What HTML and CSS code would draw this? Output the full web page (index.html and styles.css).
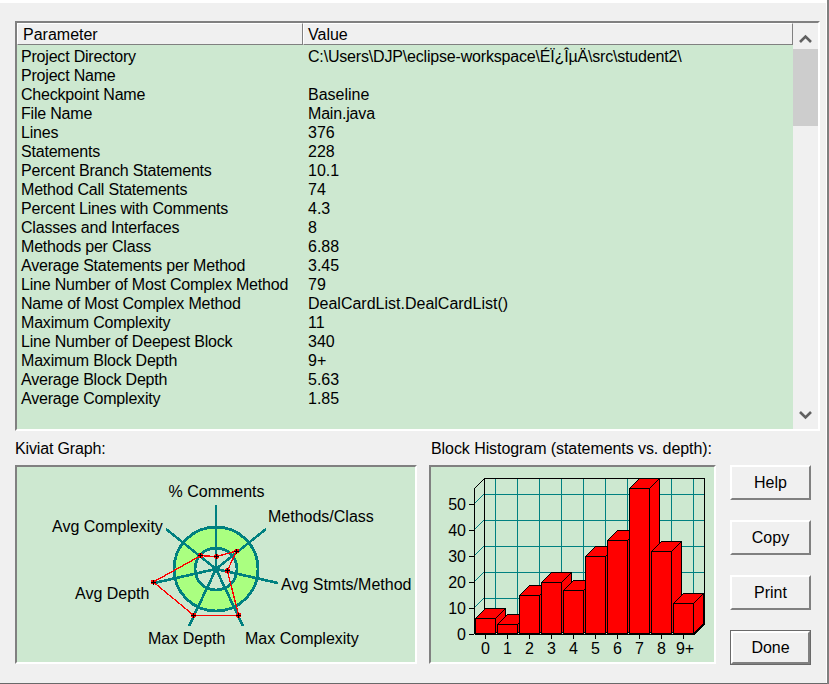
FILE: index.html
```html
<!DOCTYPE html>
<html lang="en">
<head>
<meta charset="utf-8">
<title>Project Metrics</title>
<link rel="stylesheet" href="styles.css">
</head>
<body>
<div class="window">
  <section class="table-frame">
    <div class="table-main">
      <div class="table-head">
        <div class="head-cell head-param">Parameter</div>
        <div class="head-cell head-value">Value</div>
      </div>
      <div class="table-body">
        <div class="row"><span class="param">Project Directory</span><span class="value value-tight">C:\Users\DJP\eclipse-workspace\ÉÏ¿ÎµÄ\src\student2\</span></div>
        <div class="row"><span class="param">Project Name</span><span class="value"></span></div>
        <div class="row"><span class="param">Checkpoint Name</span><span class="value">Baseline</span></div>
        <div class="row"><span class="param">File Name</span><span class="value value-tight">Main.java</span></div>
        <div class="row"><span class="param">Lines</span><span class="value">376</span></div>
        <div class="row"><span class="param">Statements</span><span class="value">228</span></div>
        <div class="row"><span class="param">Percent Branch Statements</span><span class="value">10.1</span></div>
        <div class="row"><span class="param">Method Call Statements</span><span class="value">74</span></div>
        <div class="row"><span class="param">Percent Lines with Comments</span><span class="value">4.3</span></div>
        <div class="row"><span class="param">Classes and Interfaces</span><span class="value">8</span></div>
        <div class="row"><span class="param">Methods per Class</span><span class="value">6.88</span></div>
        <div class="row"><span class="param">Average Statements per Method</span><span class="value">3.45</span></div>
        <div class="row"><span class="param">Line Number of Most Complex Method</span><span class="value">79</span></div>
        <div class="row"><span class="param">Name of Most Complex Method</span><span class="value">DealCardList.DealCardList()</span></div>
        <div class="row"><span class="param">Maximum Complexity</span><span class="value">11</span></div>
        <div class="row"><span class="param">Line Number of Deepest Block</span><span class="value">340</span></div>
        <div class="row"><span class="param">Maximum Block Depth</span><span class="value">9+</span></div>
        <div class="row"><span class="param">Average Block Depth</span><span class="value">5.63</span></div>
        <div class="row"><span class="param">Average Complexity</span><span class="value">1.85</span></div>
      </div>
    </div>
    <div class="scrollbar">
      <svg class="scroll-arrow" width="25" height="26" viewBox="0 0 25 26"><path d="M7 19l5.500-5.500L18 19" fill="none" stroke="#606060" stroke-width="2.6"/></svg>
      <div class="scroll-track"><div class="scroll-thumb"></div></div>
      <svg class="scroll-arrow" width="25" height="26" viewBox="0 0 25 26"><path d="M7 9l5.500 5.500L18 9" fill="none" stroke="#606060" stroke-width="2.6"/></svg>
    </div>
  </section>

  <section class="lower">
    <figure class="graph graph-kiviat">
      <figcaption class="caption caption-kiviat">Kiviat Graph:</figcaption>
      <div class="panel">
        <svg class="chart" width="398" height="195" viewBox="17 467 398 195">
          <g shape-rendering="crispEdges">
            <circle cx="216" cy="569" r="42" fill="#aaff80" stroke="#008080" stroke-width="2.8"/>
            <circle cx="216" cy="569" r="21" fill="#cde8d0" stroke="#008080" stroke-width="2.8"/>
            <g stroke="#008080" stroke-width="2.6">
              <line x1="216" y1="569" x2="216" y2="505"/>
              <line x1="216" y1="569" x2="266" y2="529"/>
              <line x1="216" y1="569" x2="278" y2="583"/>
              <line x1="216" y1="569" x2="243" y2="626"/>
              <line x1="216" y1="569" x2="189" y2="626"/>
              <line x1="216" y1="569" x2="154" y2="583"/>
              <line x1="216" y1="569" x2="166" y2="529"/>
            </g>
            <polygon points="216.7,556.5 236.7,551 227.3,570.7 238.7,615.3 193.7,615.3 153.3,582 200.7,555.7" fill="none" stroke="#ff0000" stroke-width="1.3"/>
            <g fill="#ff0000">
              <circle cx="216.7" cy="556.5" r="2.5"/><circle cx="236.7" cy="551" r="2.5"/><circle cx="227.3" cy="570.7" r="2.5"/><circle cx="238.7" cy="615.3" r="2.5"/><circle cx="193.7" cy="615.3" r="2.5"/><circle cx="153.3" cy="582" r="2.5"/><circle cx="200.7" cy="555.7" r="2.5"/>
            </g>
            <path d="M214 556.500h5M216.500 554v5M234 551.500h5M236.500 548.500v5M225 570.500h5M227.500 568v5M236 615.500h5M238.500 613v5M191 615.500h5M193.500 613v5M151 582.500h5M153.500 579.500v5M198 555.500h5M200.500 553v5" fill="none" stroke="#000" stroke-width="1"/>
          </g>
          <g class="chart-text">
            <text x="168.500" y="497">% Comments</text>
            <text x="268" y="522">Methods/Class</text>
            <text x="281" y="590">Avg Stmts/Method</text>
            <text x="245" y="644">Max Complexity</text>
            <text x="148" y="644">Max Depth</text>
            <text x="75" y="599">Avg Depth</text>
            <text x="52" y="532">Avg Complexity</text>
          </g>
        </svg>
      </div>
    </figure>

    <figure class="graph graph-histogram">
      <figcaption class="caption caption-histogram">Block Histogram (statements vs. depth):</figcaption>
      <div class="panel">
        <svg class="chart" width="283" height="195" viewBox="431 467 283 195">
          <g stroke="#008080" stroke-width="1" shape-rendering="crispEdges">
            <path d="M484 494.500H704M484 520.500H704M484 546.500H704M484 572.500H704M484 598.500H704"/>
            <path d="M495.500 478V624M517.500 478V624M539.500 478V624M561.500 478V624M583.500 478V624M605.500 478V624M627.500 478V624M649.500 478V624M671.500 478V624M693.500 478V624"/>
          </g>
          <path d="M474 608l10-10M474 582l10-10M474 556l10-10M474 530l10-10M474 504l10-10" stroke="#008080" fill="none" shape-rendering="crispEdges"/>
          <path d="M474.500 634V488.500l10-10H704.500V624l-10 10H474.500M484.500 478.500V624" stroke="#000" fill="none" shape-rendering="crispEdges"/>
          <path d="M469 504.500h5M469 530.500h5M469 556.500h5M469 582.500h5M469 608.500h5M469 634.500h5M485.500 634v5M507.500 634v5M529.500 634v5M551.500 634v5M573.500 634v5M595.500 634v5M617.500 634v5M639.500 634v5M661.500 634v5M683.500 634v5" stroke="#000" fill="none" shape-rendering="crispEdges"/>
          <g fill="#ff0000" stroke="#000" stroke-width="1" shape-rendering="crispEdges">
            <path d="M475.500 618.500h20v15h-20zM475.500 618.500l10-10h20l-10 10zM495.500 618.500l10-10v15l-10 10z"/>
            <path d="M497.500 624.500h20v9h-20zM497.500 624.500l10-10h20l-10 10zM517.500 624.500l10-10v9l-10 10z"/>
            <path d="M519.500 595.500h20v38h-20zM519.500 595.500l10-10h20l-10 10zM539.500 595.500l10-10v38l-10 10z"/>
            <path d="M541.500 582.500h20v51h-20zM541.500 582.500l10-10h20l-10 10zM561.500 582.500l10-10v51l-10 10z"/>
            <path d="M563.500 590.500h20v43h-20zM563.500 590.500l10-10h20l-10 10zM583.500 590.500l10-10v43l-10 10z"/>
            <path d="M585.500 556.500h20v77h-20zM585.500 556.500l10-10h20l-10 10zM605.500 556.500l10-10v77l-10 10z"/>
            <path d="M607.500 540.500h20v93h-20zM607.500 540.500l10-10h20l-10 10zM627.500 540.500l10-10v93l-10 10z"/>
            <path d="M629.500 488.500h20v145h-20zM629.500 488.500l10-10h20l-10 10zM649.500 488.500l10-10v145l-10 10z"/>
            <path d="M651.500 551.500h20v82h-20zM651.500 551.500l10-10h20l-10 10zM671.500 551.500l10-10v82l-10 10z"/>
            <path d="M673.500 603.500h20v30h-20zM673.500 603.500l10-10h20l-10 10zM693.500 603.500l10-10v30l-10 10z"/>
          </g>
          <g class="chart-text axis-y">
            <text x="466" y="510">50</text>
            <text x="466" y="536">40</text>
            <text x="466" y="562">30</text>
            <text x="466" y="588">20</text>
            <text x="466" y="614">10</text>
            <text x="466" y="640">0</text>
          </g>
          <g class="chart-text axis-x">
            <text x="485.500" y="654">0</text>
            <text x="507.500" y="654">1</text>
            <text x="529.500" y="654">2</text>
            <text x="551.500" y="654">3</text>
            <text x="573.500" y="654">4</text>
            <text x="595.500" y="654">5</text>
            <text x="617.500" y="654">6</text>
            <text x="639.500" y="654">7</text>
            <text x="661.500" y="654">8</text>
            <text x="685" y="654">9+</text>
          </g>
        </svg>
      </div>
    </figure>

    <div class="buttons">
      <button class="btn" type="button">Help</button>
      <button class="btn" type="button">Copy</button>
      <button class="btn" type="button">Print</button>
      <button class="btn btn-default" type="button">Done</button>
    </div>
  </section>
</div>
</body>
</html>
```

FILE: styles.css
```css
* { box-sizing: border-box; }

html, body {
  margin: 0;
  padding: 0;
  background: #fff;
}

body {
  width: 829px;
  height: 684px;
  overflow: hidden;
  font: 16px/19px "Liberation Sans", Arial, sans-serif;
  color: #000;
  border-right: 2px solid #7f7f7f;
}

.window {
  width: 826px;
  height: 680px;
  margin-top: 3px;
  padding: 18px 6px 0 15px;
  background: #f0f0f0;
  display: flex;
  flex-direction: column;
}

body::after {
  content: "";
  display: block;
  height: 1px;
  background: #696969;
}

.table-frame {
  display: flex;
  width: 805px;
  height: 410px;
  border: 2px solid;
  border-color: #808080 #fff #fff #808080;
}

.table-main {
  width: 776px;
  display: flex;
  flex-direction: column;
}

.table-head {
  display: flex;
  height: 22px;
  flex: none;
}

.head-cell {
  border: 1px solid;
  border-color: #fff #808080 #808080 #fff;
  line-height: 19px;
  padding-top: 1px;
}

.head-param {
  width: 286px;
  padding-left: 5px;
}

.head-value {
  flex: 1;
  padding-left: 4px;
}

.table-body {
  flex: 1;
  background: #cde8d0;
  padding: 2px 0 0 4px;
}

.row {
  display: flex;
  height: 19px;
}

.param {
  width: 287px;
  flex: none;
  letter-spacing: -0.2px;
  white-space: nowrap;
}

.value-tight {
  letter-spacing: -0.18px;
}

.scrollbar {
  flex: 1;
  display: flex;
  flex-direction: column;
}

.scroll-arrow {
  flex: none;
  display: block;
}

.scroll-track {
  flex: 1;
}

.scroll-thumb {
  width: 25px;
  height: 77px;
  background: #cdcdcd;
}

.lower {
  display: flex;
  align-items: flex-start;
}

.graph {
  margin: 0;
}

.graph-kiviat {
  width: 402px;
}

.graph-histogram {
  width: 287px;
  margin-left: 12px;
}

.caption {
  height: 34px;
  padding-top: 8px;
}

.caption-kiviat {
  letter-spacing: -0.15px;
}

.caption-histogram {
  padding-left: 2px;
  letter-spacing: -0.07px;
}

.panel {
  height: 199px;
  background: #cde8d0;
  border: 2px solid;
  border-color: #808080 #fff #fff #808080;
}

.chart {
  display: block;
}

.chart-text {
  font: 16px "Liberation Sans", Arial, sans-serif;
  fill: #000;
}

.axis-y {
  text-anchor: end;
}

.axis-x {
  text-anchor: middle;
}

.buttons {
  display: flex;
  flex-direction: column;
  gap: 20px;
  margin-left: 14px;
  padding-top: 34px;
}

.btn {
  width: 81px;
  height: 35px;
  padding: 0;
  background: #f0f0f0;
  border: 2px solid;
  border-color: #fff #808080 #808080 #fff;
  border-radius: 0;
  font: 16px "Liberation Sans", Arial, sans-serif;
  color: #000;
}

.btn-default {
  box-shadow: 0 0 0 1px #696969;
  width: 79px;
  height: 33px;
  margin: 1px;
}
```
